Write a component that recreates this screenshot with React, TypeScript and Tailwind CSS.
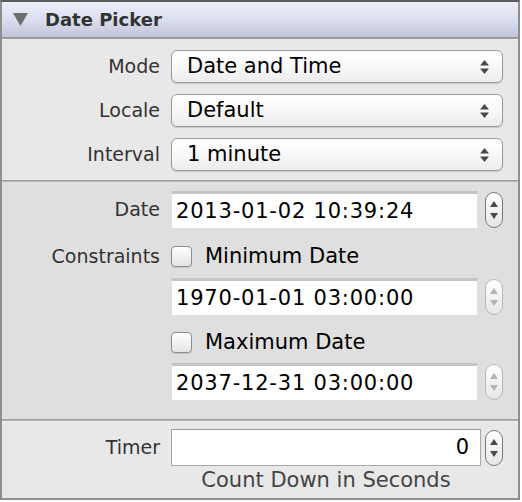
import React from "react"

const font = { fontFamily: '"DejaVu Sans", "Open Sans", sans-serif' }

function UpDown({ disabled = false }: { disabled?: boolean }) {
  const c = disabled ? "#b4b4b4" : "#4a4a4a"
  return (
    <div
      className={`w-[18px] h-[36px] rounded-[9px] border flex flex-col items-center justify-center gap-[6px] bg-gradient-to-b from-[#ffffff] to-[#e6e6e6] ${
        disabled ? "border-[#b8b8b8]" : "border-[#7a7a7a]"
      }`}
    >
      <svg width="8" height="6" viewBox="0 0 8 6">
        <polygon points="4,0 8,6 0,6" fill={c} />
      </svg>
      <svg width="8" height="6" viewBox="0 0 8 6">
        <polygon points="0,0 8,0 4,6" fill={c} />
      </svg>
    </div>
  )
}

function Popup({ value }: { value: string }) {
  return (
    <div className="w-[332px] h-[33px] rounded-[6px] border border-[#9a9a9a] bg-gradient-to-b from-[#ffffff] via-[#f8f8f8] to-[#ececec] shadow-[0_1px_1px_rgba(0,0,0,0.15)] flex items-center pl-[15px] pr-[13px]">
      <span className="flex-1 text-[21px] text-black leading-none">{value}</span>
      <svg width="9" height="16" viewBox="0 0 9 16">
        <polygon points="4.5,1 9,6.5 0,6.5" fill="#4a4a4a" />
        <polygon points="0,9.5 9,9.5 4.5,15" fill="#4a4a4a" />
      </svg>
    </div>
  )
}

function Row({ label, children }: { label: string; children: React.ReactNode }) {
  return (
    <div className="flex items-center">
      <div className="w-[158px] text-right text-[19px] text-[#333] leading-none">{label}</div>
      <div className="ml-[11px] flex items-center">{children}</div>
    </div>
  )
}

function DateField({ value, disabled = false }: { value: string; disabled?: boolean }) {
  return (
    <div className="flex items-center">
      <div className="w-[307px] h-[37px] bg-white border-t-[3px] border-[#c4c4c4] border-x border-x-[#e2e2e2] flex items-center pl-[4px]">
        <span className="text-[21px] tracking-[0.8px] text-black leading-none">{value}</span>
      </div>
      <div className="ml-[7px]">
        <UpDown disabled={disabled} />
      </div>
    </div>
  )
}

function Checkbox({ label }: { label: string }) {
  return (
    <div className="flex items-center">
      <div className="w-[21px] h-[21px] rounded-[4px] border border-[#8c8c8c] bg-gradient-to-b from-[#ffffff] to-[#e4e4e4] shadow-[0_1px_1px_rgba(0,0,0,0.12)]" />
      <span className="ml-[13px] text-[21px] text-black leading-none">{label}</span>
    </div>
  )
}

function Divider() {
  return (
    <div>
      <div className="h-px bg-[#9c9c9c]" />
      <div className="h-px bg-[#b8b8b8]" />
    </div>
  )
}

export default function App() {
  return (
    <div className="w-[522px] h-[502px] bg-white" style={font}>
      <div className="w-[520px] h-[500px] border-t-2 border-t-[#5c5c5c] border-x-2 border-x-[#8e8e8e] border-b-2 border-b-[#8e8e8e] flex flex-col">
        <div className="h-[35px] bg-gradient-to-b from-[#eceef9] via-[#dcdff0] to-[#c2c5d8] flex items-center">
          <svg className="ml-[11px]" width="15" height="13" viewBox="0 0 15 13">
            <polygon points="0,0 15,0 7.5,13" fill="#6e6e6e" />
          </svg>
          <span className="ml-[17px] text-[18px] font-bold text-[#333] leading-none">Date Picker</span>
        </div>
        <div className="h-[2px] bg-[#9a9a9a]" />

        <div className="bg-[#e8e8e8] flex flex-col gap-[11px] pt-[11px] pb-[9px]">
          <Row label="Mode">
            <Popup value="Date and Time" />
          </Row>
          <Row label="Locale">
            <Popup value="Default" />
          </Row>
          <Row label="Interval">
            <Popup value="1 minute" />
          </Row>
        </div>
        <Divider />

        <div className="bg-[#dfdfdf] flex flex-col pt-[9px] h-[237px]">
          <Row label="Date">
            <DateField value="2013-01-02 10:39:24" />
          </Row>
          <div className="mt-[18px]">
            <Row label="Constraints">
              <Checkbox label="Minimum Date" />
            </Row>
          </div>
          <div className="ml-[169px] mt-[11px]">
            <DateField value="1970-01-01 03:00:00" disabled />
          </div>
          <div className="ml-[169px] mt-[17px]">
            <Checkbox label="Maximum Date" />
          </div>
          <div className="ml-[169px] mt-[10px]">
            <DateField value="2037-12-31 03:00:00" disabled />
          </div>
        </div>
        <Divider />

        <div className="bg-[#e8e8e8] flex-1 flex flex-col pt-[8px]">
          <Row label="Timer">
            <div className="flex items-center">
              <div className="w-[310px] h-[37px] bg-white border border-[#a8a8a8] border-t-[#9a9a9a] flex items-center justify-end pr-[11px]">
                <span className="text-[21px] text-black leading-none">0</span>
              </div>
              <div className="ml-[4px]">
                <UpDown />
              </div>
            </div>
          </Row>
          <div className="ml-[169px] w-[310px] text-center text-[21px] text-[#444] leading-none mt-[4px]">
            Count Down in Seconds
          </div>
        </div>
      </div>
    </div>
  )
}
